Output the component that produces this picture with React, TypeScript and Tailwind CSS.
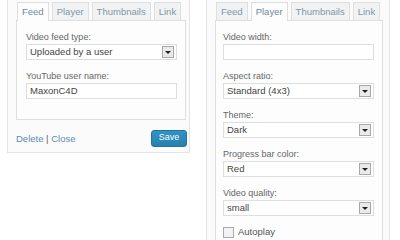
const fieldLabel = "text-[9px] leading-[14px] text-[#666]";

const Tabs = ({ active }: { active: string }) => {
  const tabs = ["Feed", "Player", "Thumbnails", "Link"];
  return (
    <div className="flex items-end gap-[3px] pl-[1px] h-[19px]">
      {tabs.map((t) =>
        t === active ? (
          <div
            key={t}
            className="relative z-10 -mb-[1px] h-[19px] px-[4px] border border-b-0 border-[#dfdfdf] bg-[#fdfdfd] text-[9.5px] leading-[18px] text-[#6f8ba0]"
          >
            {t}
          </div>
        ) : (
          <div
            key={t}
            className="h-[18px] px-[4px] border border-b-0 border-[#dfdfdf] bg-[#f1f2f3] text-[9.5px] leading-[18px] text-[#8198a8]"
          >
            {t}
          </div>
        )
      )}
    </div>
  );
};

const Select = ({ value }: { value: string }) => (
  <div className="flex items-center justify-between w-[151px] h-[16px] border border-[#dedede] bg-white pl-[3px] pr-[2px]">
    <span className="text-[9.5px] text-[#444]">{value}</span>
    <span className="flex items-center justify-center w-[12px] h-[12px] border border-[#a8a8a8] bg-[#eaeaea]">
      <span className="w-0 h-0 border-x-[3px] border-x-transparent border-t-[3px] border-t-[#222]" />
    </span>
  </div>
);

const Input = ({ value }: { value: string }) => (
  <div className="flex items-center w-[151px] h-[16px] border border-[#dedede] bg-white pl-[3px]">
    <span className="text-[9.5px] text-[#444]">{value}</span>
  </div>
);

const Field = ({ label, children }: { label: string; children: React.ReactNode }) => (
  <div className="mb-[9px]">
    <p className={fieldLabel}>{label}</p>
    {children}
  </div>
);

export default function App() {
  return (
    <div
      className="flex w-[400px] h-[240px] overflow-hidden bg-white"
      style={{ fontFamily: '"Liberation Sans", Arial, sans-serif' }}
    >
      {/* feed widget */}
      <div className="ml-[7px] w-[183px] h-[153px] border border-t-0 border-[#e4e4e4] bg-[#fbfbfb] pl-[8px] pt-[1px] shrink-0">
        <Tabs active="Feed" />
        <div className="w-[170px] h-[100px] border border-[#dfdfdf] bg-[#fdfdfd] pt-[9px] pl-[9px]">
          <Field label="Video feed type:">
            <Select value="Uploaded by a user" />
          </Field>
          <Field label="YouTube user name:">
            <Input value="MaxonC4D" />
          </Field>
        </div>
        <div className="flex items-center justify-between mt-[7px] pr-[2px]">
          <p className="text-[9.5px] leading-[20px] pt-[2px] text-[#5b8db2]">
            Delete <span className="text-[#666]">|</span> Close
          </p>
          <button className="w-[36px] h-[17px] rounded-[3px] border border-[#23739c] bg-gradient-to-b from-[#3192c3] to-[#2781af] text-[9px] text-white">
            Save
          </button>
        </div>
      </div>

      {/* player widget */}
      <div className="ml-[16px] w-[184px] h-[260px] border-x border-[#e4e4e4] bg-[#fbfbfb] pl-[8px] pt-[1px] shrink-0">
        <Tabs active="Player" />
        <div className="w-[168px] h-[260px] border border-[#dfdfdf] bg-[#fdfdfd] pt-[9px] pl-[7px]">
          <Field label="Video width:">
            <Input value="" />
          </Field>
          <Field label="Aspect ratio:">
            <Select value="Standard (4x3)" />
          </Field>
          <Field label="Theme:">
            <Select value="Dark" />
          </Field>
          <Field label="Progress bar color:">
            <Select value="Red" />
          </Field>
          <Field label="Video quality:">
            <Select value="small" />
          </Field>
          <label className="flex items-center gap-[4px] mt-[4px]">
            <span className="w-[11px] h-[11px] border border-[#aaa] bg-[#f3f3f3]" />
            <span className="text-[9.5px] text-[#555]">Autoplay</span>
          </label>
        </div>
      </div>
    </div>
  );
}
